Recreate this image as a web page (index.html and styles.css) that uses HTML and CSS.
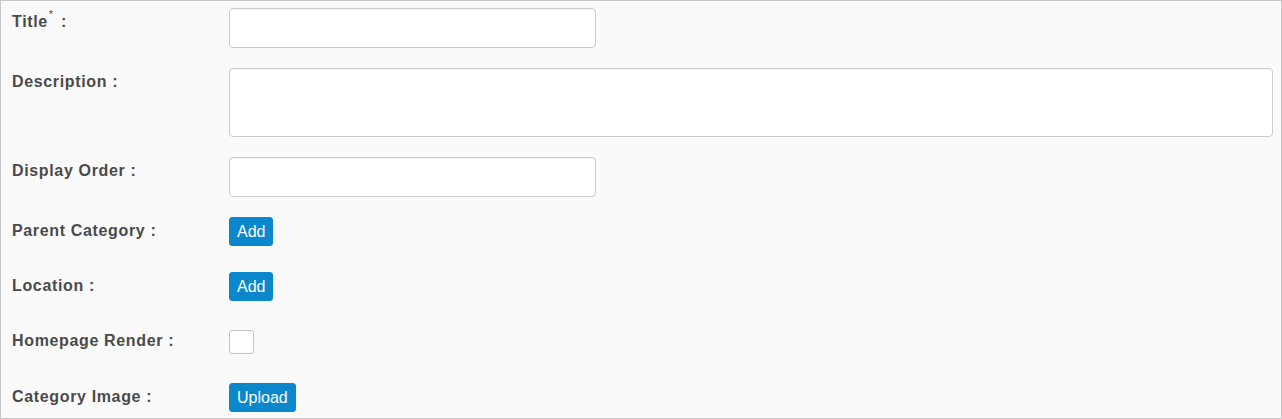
FILE: index.html
```html
<!DOCTYPE html>
<html>
<head>
<meta charset="utf-8">
<link rel="stylesheet" href="styles.css">
</head>
<body>
<form class="form">
  <div class="row">
    <label class="label">Title<sup class="req">*</sup> :</label>
    <input class="input" type="text">
  </div>
  <div class="row">
    <label class="label">Description :</label>
    <textarea class="textarea"></textarea>
  </div>
  <div class="row">
    <label class="label">Display Order :</label>
    <input class="input" type="text">
  </div>
  <div class="row short">
    <label class="label">Parent Category :</label>
    <button type="button" class="btn">Add</button>
  </div>
  <div class="row short">
    <label class="label">Location :</label>
    <button type="button" class="btn">Add</button>
  </div>
  <div class="row short check-row">
    <label class="label">Homepage Render :</label>
    <span class="checkbox"></span>
  </div>
  <div class="row short">
    <label class="label">Category Image :</label>
    <button type="button" class="btn">Upload</button>
  </div>
</form>
</body>
</html>
```
FILE: styles.css
```css
html, body {
  margin: 0;
  padding: 0;
}
body {
  width: 1282px;
  height: 419px;
  box-sizing: border-box;
  border: 1px solid #c6c6c6;
  background: #fafafa;
  font-family: "Liberation Sans", Arial, sans-serif;
  overflow: hidden;
}
.form {
  padding: 7px 0 0 11px;
}
.row {
  display: flex;
  align-items: flex-start;
  margin-bottom: 20px;
}
.row.short {
  min-height: 35px;
}
.row.check-row {
  min-height: 36px;
}
.label {
  width: 217px;
  flex: none;
  padding-top: 4px;
  line-height: 20px;
  font-size: 16px;
  font-weight: bold;
  letter-spacing: 0.65px;
  color: #4a4a4a;
}
.req {
  font-size: 11px;
  font-weight: normal;
  vertical-align: 9px;
  line-height: 0;
  margin-left: 1px;
  margin-right: 2px;
}
.input, .textarea {
  box-sizing: border-box;
  border: 1px solid #cccccc;
  border-radius: 4px;
  background: #ffffff;
  box-shadow: inset 0 1px 1px rgba(0,0,0,0.04);
  margin: 0;
  padding: 6px 10px;
  font-family: "Liberation Sans", Arial, sans-serif;
  font-size: 14px;
  outline: none;
}
.input {
  width: 367px;
  height: 40px;
}
.textarea {
  width: 1044px;
  height: 69px;
  resize: none;
  margin-bottom: 0;
}
.btn {
  box-sizing: border-box;
  height: 29px;
  margin: 0;
  padding: 0 7px;
  border: 1px solid #0a88cb;
  border-radius: 3px;
  background: #0a88cb;
  color: #ffffff;
  font-family: "Liberation Sans", Arial, sans-serif;
  font-size: 16px;
  line-height: 27px;
}
.checkbox {
  display: block;
  box-sizing: border-box;
  width: 25px;
  height: 24px;
  margin-top: 3px;
  border: 1px solid #c4c4c4;
  border-radius: 3px;
  background: #ffffff;
}
```
